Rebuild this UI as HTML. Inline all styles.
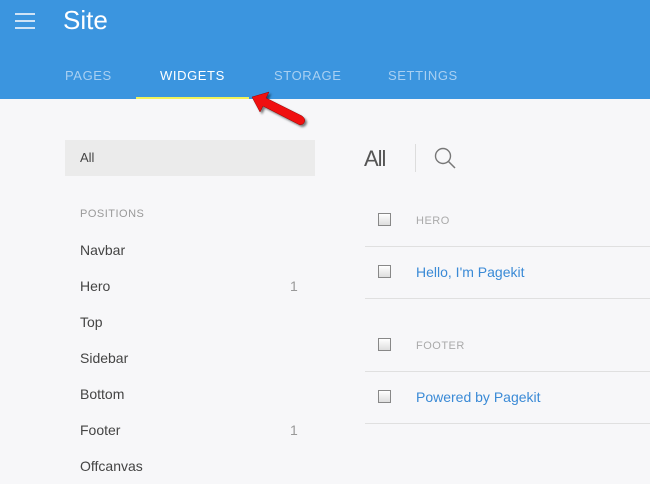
<!DOCTYPE html>
<html><head><style>
body{margin:0;width:650px;height:484px;background:#f7f7f9;font-family:"Liberation Sans",sans-serif;position:relative;overflow:hidden}
.hd{position:absolute;left:0;top:0;width:650px;height:99px;background:#3b95df}
.t{position:absolute;color:#fff}
.tab{position:absolute;top:68px;font-size:13px;letter-spacing:.6px;color:#a9d0f2}
.a{position:absolute;font-size:14px;color:#444}
.cb{position:absolute;left:378px;width:11px;height:11px;border:1px solid #888;background:linear-gradient(#fff,#ddd)}
.ln{position:absolute;left:365px;width:285px;height:1px;background:#e0e0e0}
.lk{position:absolute;left:416px;font-size:14px;color:#3a8ad6}
.cap{position:absolute;left:416px;font-size:11px;color:#aaa;letter-spacing:.5px}
</style></head><body>
<div class="hd"></div>
<div style="position:absolute;left:15px;top:13px;width:20px;height:2px;background:#cfe3f6;box-shadow:0 7px 0 #cfe3f6,0 14px 0 #cfe3f6"></div>
<div class="t" style="left:63px;top:5px;font-size:26px;font-weight:300">Site</div>
<div class="tab" style="left:65px">PAGES</div>
<div class="tab" style="left:160px;color:#fff">WIDGETS</div>
<div class="tab" style="left:274px">STORAGE</div>
<div class="tab" style="left:388px">SETTINGS</div>
<div style="position:absolute;left:136px;top:97px;width:113px;height:2px;background:#f2f35a"></div>
<svg style="position:absolute;left:245px;top:88px" width="70" height="45"><path d="M7 9 L24 4 L21 10 L57 28 Q62 32 58 36 L55 37 L18 18 L15 24 Z" fill="#f01010" stroke="#900" stroke-width="0.5" style="filter:drop-shadow(2px 2px 1px rgba(0,0,0,.5))"/></svg>
<div style="position:absolute;left:65px;top:140px;width:250px;height:36px;background:#ebebeb"></div>
<div class="a" style="left:80px;top:150px;font-size:13px">All</div>
<div class="a" style="left:80px;top:208px;font-size:11px;color:#999;letter-spacing:.5px">POSITIONS</div>
<div class="a" style="left:80px;top:242px">Navbar</div>
<div class="a" style="left:80px;top:278px">Hero</div><div class="a" style="left:290px;top:278px;color:#999">1</div>
<div class="a" style="left:80px;top:314px">Top</div>
<div class="a" style="left:80px;top:350px">Sidebar</div>
<div class="a" style="left:80px;top:386px">Bottom</div>
<div class="a" style="left:80px;top:422px">Footer</div><div class="a" style="left:290px;top:422px;color:#999">1</div>
<div class="a" style="left:80px;top:458px">Offcanvas</div>
<div class="a" style="left:364px;top:146px;font-size:22px;color:#555;letter-spacing:-1px">All</div>
<div style="position:absolute;left:415px;top:144px;width:1px;height:28px;background:#ddd"></div>
<svg style="position:absolute;left:433px;top:146px" width="25" height="25"><circle cx="10" cy="10" r="7.5" fill="none" stroke="#777" stroke-width="1.4"/><path d="M15.5 15.5L22 22" stroke="#777" stroke-width="1.5"/></svg>
<div class="cb" style="top:213px"></div><div class="cap" style="top:215px">HERO</div>
<div class="ln" style="top:246px"></div>
<div class="cb" style="top:265px"></div><div class="lk" style="top:264px">Hello, I'm Pagekit</div>
<div class="ln" style="top:298px"></div>
<div class="cb" style="top:338px"></div><div class="cap" style="top:340px">FOOTER</div>
<div class="ln" style="top:371px"></div>
<div class="cb" style="top:390px"></div><div class="lk" style="top:389px">Powered by Pagekit</div>
<div class="ln" style="top:423px"></div>
</body></html>
